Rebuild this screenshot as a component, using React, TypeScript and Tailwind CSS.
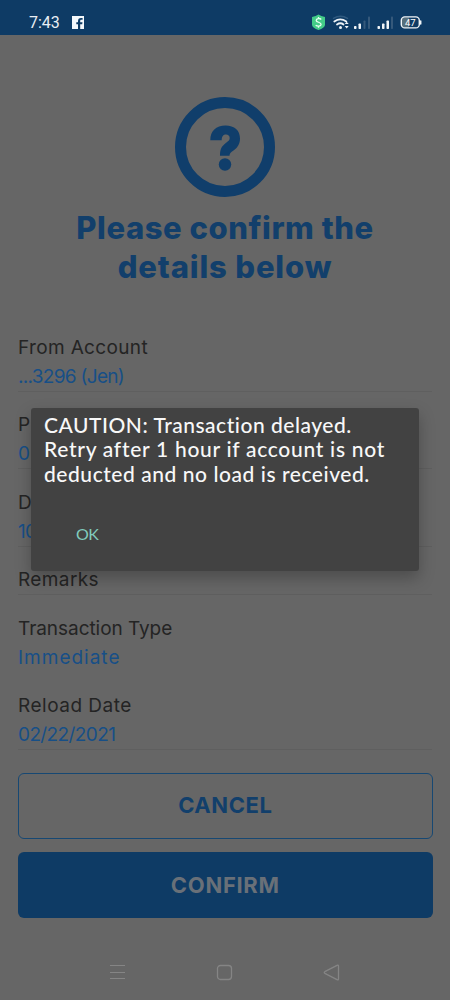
import React from "react";

type FieldProps = {
  label: string;
  value?: string;
  labelClass?: string;
  valueClass?: string;
  line?: boolean;
};

function Field({ label, value, labelClass = "", valueClass = "", line = true }: FieldProps) {
  return (
    <div className={`mb-[18.5px] border-b ${line ? "border-[#5f5f5f]" : "border-transparent"}`}>
      <div className="h-[29px] text-[19px] leading-[29px] text-[#242424]">
        <span className={labelClass}>{label}</span>
      </div>
      {value && (
        <div className="h-[29px] text-[19px] leading-[29px] text-[#174f87]">
          <span className={valueClass}>{value}</span>
        </div>
      )}
    </div>
  );
}

function StatusBar() {
  return (
    <header className="flex h-[35px] items-start justify-between bg-[#0e3b65] pr-[28px] pl-[29px] pt-[13px] text-[#e8eef4]">
      <div className="flex h-[19px] items-center">
        <span className="w-[42px] font-['Roboto',sans-serif] text-[16px] leading-[19px] tracking-[0px]">7:43</span>
        <svg className="-mt-px ml-px" width="12" height="13" viewBox="0 0 12 13">
          <path fill="#f4f8fb" d="M0 0h12v13H8.2V8.2h2l.3-2H8.2V5c0-.8.3-1.2 1.2-1.2h1.2V2.1H9C7 2.1 6 3.2 6 4.9v1.3H4.3v2H6V13H0z" />
        </svg>
      </div>
      <div className="flex h-[19px] items-center">
        <svg width="110" height="19" viewBox="0 0 110 19">
          <path fill="#43cb88" d="M0 4q4-.4 6.500-2.400Q9 3.600 13 4v8q-.5 3-6.500 5Q.5 15 0 12z" />
          <path fill="none" stroke="#e8fff3" strokeWidth="1.300" d="M9.200 6.500C8 5 4.200 5.200 4.200 7.400s4.900 1.500 4.900 3.900c0 2.200-4 2.300-5.400.8M6.500 4v1.500M6.500 13v1.700" />
          <g fill="none" strokeLinecap="round">
            <path stroke="#2f597f" strokeWidth="1.500" d="M21.500 5.300q7-4.300 14 0" />
            <path stroke="#eef3f7" strokeWidth="1.800" d="M22.300 8.500q6-4.300 12 0M25 11.500q3.500-2.500 6.500 0" />
          </g>
          <circle cx="28.500" cy="14.500" r="1.500" fill="#eef3f7" />
          <path fill="#eef3f7" d="m32.700 11 2-2.300 2 2.300zM32.700 13l2 2.500 2-2.500z" />
          <g fill="#f1f5f8">
            <rect x="42" y="13" width="2.500" height="3" rx=".7" />
            <rect x="46.500" y="10.500" width="2.500" height="5.500" rx=".7" />
            <rect x="65.500" y="13" width="2.500" height="3" rx=".7" />
            <rect x="70" y="10.500" width="2.500" height="5.500" rx=".7" />
            <rect x="74.500" y="7.500" width="2.500" height="8.500" rx=".7" />
          </g>
          <g fill="#35597b">
            <rect x="51.500" y="7.500" width="2" height="8.500" rx=".7" />
            <rect x="56" y="3.500" width="2" height="12.500" rx=".7" />
            <rect x="79" y="3.500" width="2" height="12.500" rx=".7" />
          </g>
          <path fill="#566f7c" d="M92 4.500h5v10h-5q-2.500 0-2.500-3v-4q0-3 2.500-3" />
          <rect x="89.300" y="3.900" width="18" height="11" rx="3.500" fill="none" stroke="#f1f5f8" strokeWidth="1.400" />
          <path stroke="#f1f5f8" strokeWidth="1.500" strokeLinecap="round" d="M108.700 8v3" />
          <text x="98.300" y="12.800" textAnchor="middle" fill="#fff" fontSize="9.500" fontFamily="Roboto, sans-serif">47</text>
        </svg>
      </div>
    </header>
  );
}

function Dialog() {
  return (
    <div className="absolute top-[408px] left-[31px] h-[163px] w-[388px] rounded-[3px] bg-[#424242] pt-[5px] pl-[13px] font-['Lato',sans-serif] shadow-[0_7px_16px_rgba(0,0,0,0.26)]">
      <div className="text-[21px] leading-[24.400px] font-medium whitespace-nowrap text-[#f8f8f8]">
        <div className="tracking-[0.520px]">CAUTION: Transaction delayed.</div>
        <div className="tracking-[0.710px]">Retry after 1 hour if account is not</div>
        <div className="tracking-[0.550px]">deducted and no load is received.</div>
      </div>
      <button className="mt-[35.500px] ml-[32px] block text-[16px] leading-[24px] tracking-[-0.500px] text-[#80cbbd]">OK</button>
    </div>
  );
}

export default function App() {
  return (
    <div className="relative flex h-[1000px] w-[450px] flex-col overflow-hidden bg-[#666666] font-['Inter',sans-serif]">
      <StatusBar />
      <main className="flex flex-col px-[18px] pt-[62px]">
        <svg className="self-center" width="100" height="100" viewBox="0 0 100 100">
          <circle cx="50" cy="50" r="44.500" fill="none" stroke="#103e6b" strokeWidth="11" />
          <path fill="#103e6b" d="M35.300 43.300C35.300 34 41 28.500 50.500 28.500 59.500 28.500 65 33.500 65 41.500c0 6-3 9.500-6.500 12-2.800 2-4 3-4 5.200H45c0-6.500 1.500-9.200 5.500-12.400 2.800-2.200 4.200-3.100 4.200-5.300 0-2.200-1.500-3.600-3.700-3.600-2.700 0-4.300 1.900-4.300 5.900z" />
          <circle cx="50" cy="67.500" r="6.200" fill="#103e6b" />
        </svg>
        <h1 className="mt-[11px] text-center text-[31px] leading-[39px] font-extrabold whitespace-nowrap text-[#123f6b]">
          <div className="tracking-[0.550px]">Please confirm the</div>
          <div className="tracking-[0.850px]">details below</div>
        </h1>
        <section className="mt-[46.500px]">
          <Field label="From Account" value="...3296 (Jen)" labelClass="tracking-[0.350px]" valueClass="tracking-[-0.700px]" />
          <Field label="P" value="0" />
          <Field label="D" value="10" valueClass="tracking-[-0.700px]" />
          <Field label="Remarks" labelClass="tracking-[0.400px]" />
          <Field label="Transaction Type" value="Immediate" line={false} labelClass="tracking-[-0.050px]" valueClass="tracking-[1px]" />
          <Field label="Reload Date" value="02/22/2021" labelClass="tracking-[0.500px]" valueClass="tracking-[-0.600px]" />
        </section>
        <div className="mt-[4px] -mr-px -ml-[0.500px] flex flex-col gap-[13px] text-[22px] font-bold">
          <button className="h-[66.500px] rounded-[6px] border border-[#174873] tracking-[0.550px] text-[#123f6b]">CANCEL</button>
          <button className="h-[66px] rounded-[6px] bg-[#0e3b65] tracking-[0.700px] text-[#697078]">CONFIRM</button>
        </div>
      </main>
      <nav className="mt-auto mr-px flex h-[55px] items-center justify-center gap-[90px]">
        <svg width="17" height="17" viewBox="0 0 17 17" fill="none" stroke="#858585">
          <path d="M1 1.500h15M1 8.500h15M1 14.500h15" />
        </svg>
        <svg width="17" height="17" viewBox="0 0 17 17" fill="none" stroke="#858585" strokeWidth="1.300">
          <rect x="1.500" y="1.500" width="14" height="14" rx="3" />
        </svg>
        <svg width="17" height="17" viewBox="0 0 17 17" fill="none" stroke="#858585" strokeWidth="1.300" strokeLinejoin="round">
          <path d="M14.500 1.200Q15.500.7 15.500 2v13q0 1.300-1 .8L1.800 9.300q-1.200-.8 0-1.600z" />
        </svg>
      </nav>
      <Dialog />
    </div>
  );
}
